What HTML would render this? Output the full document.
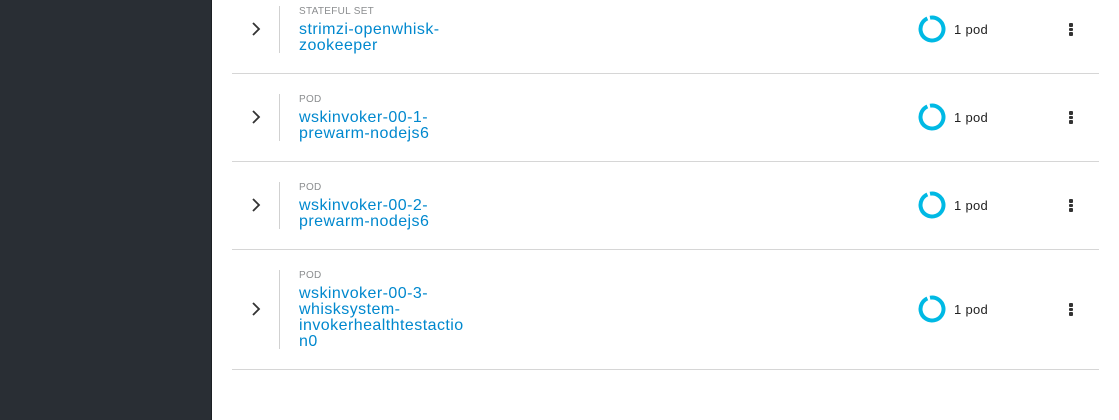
<!DOCTYPE html>
<html><head><style>
body{margin:0;width:1119px;height:420px;background:#fff;position:relative;overflow:hidden;font-family:"Liberation Sans",sans-serif}
.side{position:absolute;left:0;top:0;width:211px;height:420px;background:#292e34;border-right:1px solid #1c1f23}
.sep{position:absolute;left:232px;width:867px;height:1px;background:#d6d6d6}
.vl{position:absolute;left:279px;width:1px;background:#d1d1d1}
.lbl{position:absolute;left:299px;font-size:10px;color:#8b8d8f;letter-spacing:0.3px}
.ttl{position:absolute;left:299px;font-size:16px;line-height:16px;color:#0088ce;width:190px;letter-spacing:0.45px}
.chev{position:absolute;left:250px}
.don{position:absolute;left:918px}
.pod{position:absolute;left:954px;font-size:13px;color:#222;letter-spacing:0.3px}
.keb{position:absolute;left:1069px;width:4px}
.keb i{display:block;width:4px;height:3.5px;border-radius:1px;background:#333;margin-bottom:1px}
</style></head><body>
<div class="side"></div>
<div class="sep" style="top:73px"></div>
<div class="sep" style="top:161px"></div>
<div class="sep" style="top:249px"></div>
<div class="sep" style="top:369px"></div>

<div class="vl" style="top:6px;height:47px"></div>
<div class="vl" style="top:94px;height:47px"></div>
<div class="vl" style="top:182px;height:47px"></div>
<div class="vl" style="top:270px;height:79px"></div>

<div class="lbl" style="top:6px">STATEFUL SET</div>
<div class="ttl" style="top:22px">strimzi-openwhisk-<br>zookeeper</div>
<div class="lbl" style="top:94px">POD</div>
<div class="ttl" style="top:110px">wskinvoker-00-1-<br>prewarm-nodejs6</div>
<div class="lbl" style="top:182px">POD</div>
<div class="ttl" style="top:198px">wskinvoker-00-2-<br>prewarm-nodejs6</div>
<div class="lbl" style="top:270px">POD</div>
<div class="ttl" style="top:286px">wskinvoker-00-3-<br>whisksystem-<br>invokerhealthtestactio<br>n0</div>

<svg class="chev" style="top:21px" width="12" height="16" viewBox="0 0 12 16"><path d="M3 2l6 6-6 6" fill="none" stroke="#333" stroke-width="1.8"/></svg>
<svg class="chev" style="top:109px" width="12" height="16" viewBox="0 0 12 16"><path d="M3 2l6 6-6 6" fill="none" stroke="#333" stroke-width="1.8"/></svg>
<svg class="chev" style="top:197px" width="12" height="16" viewBox="0 0 12 16"><path d="M3 2l6 6-6 6" fill="none" stroke="#333" stroke-width="1.8"/></svg>
<svg class="chev" style="top:301px" width="12" height="16" viewBox="0 0 12 16"><path d="M3 2l6 6-6 6" fill="none" stroke="#333" stroke-width="1.8"/></svg>

<svg class="don" style="top:15px" width="28" height="28" viewBox="0 0 28 28"><circle cx="14" cy="14" r="11.5" fill="none" stroke="#00b9e4" stroke-width="4" stroke-dasharray="69 3.3" transform="rotate(-100 14 14)"/></svg>
<svg class="don" style="top:103px" width="28" height="28" viewBox="0 0 28 28"><circle cx="14" cy="14" r="11.5" fill="none" stroke="#00b9e4" stroke-width="4" stroke-dasharray="69 3.3" transform="rotate(-100 14 14)"/></svg>
<svg class="don" style="top:191px" width="28" height="28" viewBox="0 0 28 28"><circle cx="14" cy="14" r="11.5" fill="none" stroke="#00b9e4" stroke-width="4" stroke-dasharray="69 3.3" transform="rotate(-100 14 14)"/></svg>
<svg class="don" style="top:295px" width="28" height="28" viewBox="0 0 28 28"><circle cx="14" cy="14" r="11.5" fill="none" stroke="#00b9e4" stroke-width="4" stroke-dasharray="69 3.3" transform="rotate(-100 14 14)"/></svg>

<div class="pod" style="top:22px">1 pod</div>
<div class="pod" style="top:110px">1 pod</div>
<div class="pod" style="top:198px">1 pod</div>
<div class="pod" style="top:302px">1 pod</div>

<div class="keb" style="top:23px"><i></i><i></i><i></i></div>
<div class="keb" style="top:111px"><i></i><i></i><i></i></div>
<div class="keb" style="top:199px"><i></i><i></i><i></i></div>
<div class="keb" style="top:303px"><i></i><i></i><i></i></div>
</body></html>
